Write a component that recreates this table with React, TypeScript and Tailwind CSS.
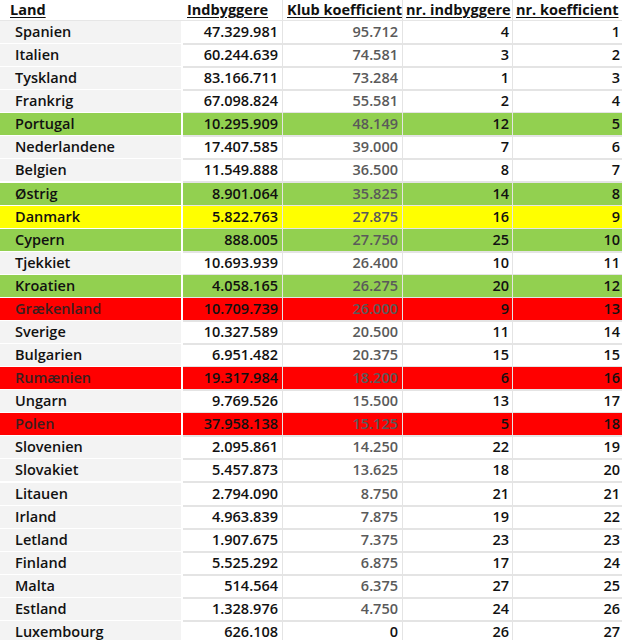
import React from "react";

type Row = [string, string, string, number, number, string?];

const ROWS: Row[] = [
  ["Spanien", "47.329.981", "95.712", 4, 1],
  ["Italien", "60.244.639", "74.581", 3, 2],
  ["Tyskland", "83.166.711", "73.284", 1, 3],
  ["Frankrig", "67.098.824", "55.581", 2, 4],
  ["Portugal", "10.295.909", "48.149", 12, 5, "green"],
  ["Nederlandene", "17.407.585", "39.000", 7, 6],
  ["Belgien", "11.549.888", "36.500", 8, 7],
  ["Østrig", "8.901.064", "35.825", 14, 8, "green"],
  ["Danmark", "5.822.763", "27.875", 16, 9, "yellow"],
  ["Cypern", "888.005", "27.750", 25, 10, "green"],
  ["Tjekkiet", "10.693.939", "26.400", 10, 11],
  ["Kroatien", "4.058.165", "26.275", 20, 12, "green"],
  ["Grækenland", "10.709.739", "26.000", 9, 13, "red"],
  ["Sverige", "10.327.589", "20.500", 11, 14],
  ["Bulgarien", "6.951.482", "20.375", 15, 15],
  ["Rumænien", "19.317.984", "18.200", 6, 16, "red"],
  ["Ungarn", "9.769.526", "15.500", 13, 17],
  ["Polen", "37.958.138", "15.125", 5, 18, "red"],
  ["Slovenien", "2.095.861", "14.250", 22, 19],
  ["Slovakiet", "5.457.873", "13.625", 18, 20],
  ["Litauen", "2.794.090", "8.750", 21, 21],
  ["Irland", "4.963.839", "7.875", 19, 22],
  ["Letland", "1.907.675", "7.375", 23, 23],
  ["Finland", "5.525.292", "6.875", 17, 24],
  ["Malta", "514.564", "6.375", 27, 25],
  ["Estland", "1.328.976", "4.750", 24, 26],
  ["Luxembourg", "626.108", "0", 26, 27],
];

const FILL: Record<string, string> = {
  green: "bg-[#92d050]",
  yellow: "bg-[#ffff00]",
  red: "bg-[#ff0000]",
};

const cols = "grid grid-cols-[183px_100px_120px_110px_109px]";

export default function App() {
  return (
    <div className="w-[622px] h-[640px] overflow-hidden bg-white text-[#111] font-['Open_Sans',sans-serif]">
      <div className={`${cols} h-[21px] text-[14.5px] font-bold leading-[19px] underline underline-offset-2 decoration-1 border-b border-[#e6e6e6]`}>
        <div className="pl-[10px]">Land</div>
        <div className="pl-[4px] border-r border-[#e3e3e3]">Indbyggere</div>
        <div className="pl-[4px] border-r border-[#e3e3e3] whitespace-nowrap">Klub koefficient</div>
        <div className="pl-[3px] border-r border-[#e3e3e3] whitespace-nowrap">nr. indbyggere</div>
        <div className="pl-[3px] whitespace-nowrap">nr. koefficient</div>
      </div>
      {ROWS.map(([land, ind, klub, nrI, nrK, fill]) => {
        const bg = fill ? FILL[fill] : "";
        return (
          <div key={land} className={`${cols} h-[23.08px] text-[14.5px] font-semibold leading-[22px]`}>
            <div className={`pl-[15px] border-b-2 border-r-2 border-white ${bg || "bg-[#f3f3f3]"} ${fill === "red" ? "text-[#3a1f1f]" : ""}`}>
              {land}
            </div>
            <div className={`text-right pr-[4px] border-b-2 border-r border-[#e4e4e4] ${bg}`}>{ind}</div>
            <div className={`text-right pr-[4px] border-b-2 border-r border-[#e4e4e4] ${bg} ${klub === "0" ? "" : "text-[#5a5a5a]"}`}>{klub}</div>
            <div className={`text-right pr-[3px] border-b-2 border-r border-[#e4e4e4] ${bg}`}>{nrI}</div>
            <div className={`text-right pr-[2px] border-b-2 border-[#e4e4e4] ${bg}`}>{nrK}</div>
          </div>
        );
      })}
    </div>
  );
}
